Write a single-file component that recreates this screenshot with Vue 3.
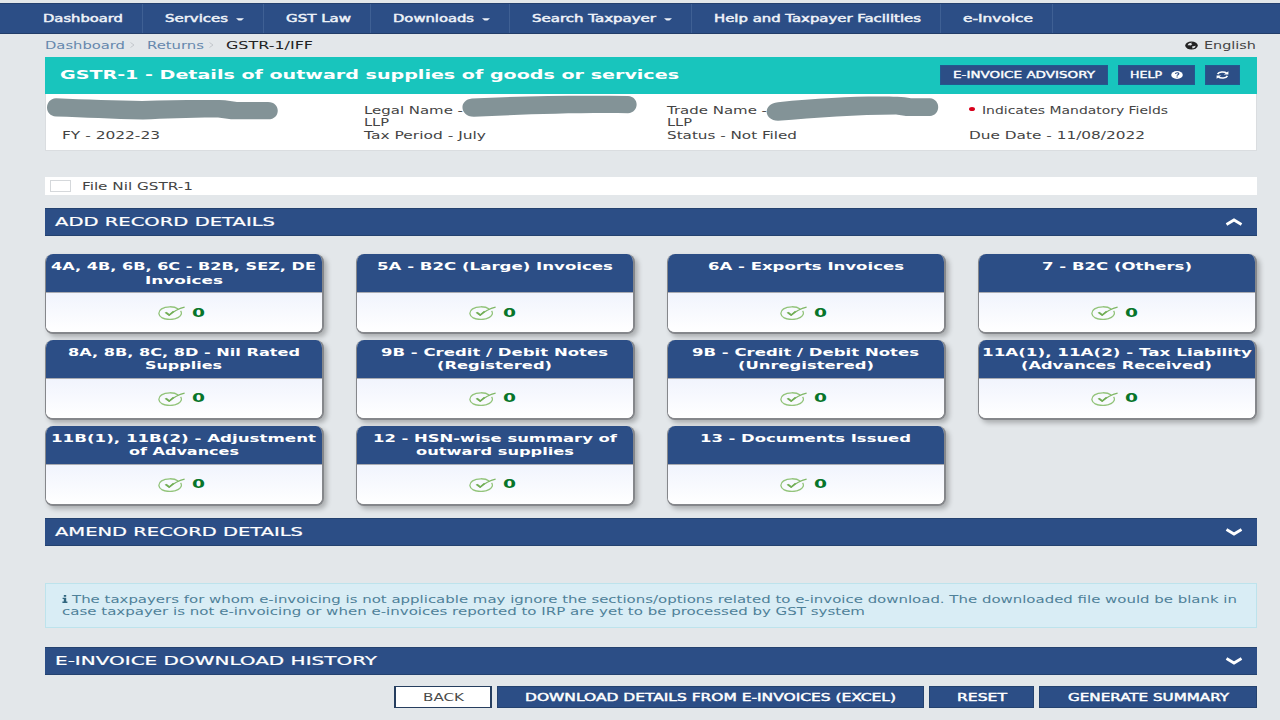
<template>
  <div class="page">
    <nav class="navbar">
      <a v-for="item in navItems" :key="item.text" class="nav-item">
        <WideText :text="item.text" :w="item.w" />
        <svg v-if="item.menu" class="caret" width="8" height="3" viewBox="0 0 8 3">
          <path d="M0 0.3H8L5.4 2.4H2.6Z" fill="currentColor" />
        </svg>
      </a>
    </nav>

    <main class="content">
      <div class="topline">
        <div class="breadcrumb">
          <a><WideText text="Dashboard" :w="80" /></a>
          <svg class="sep" width="5" height="6" viewBox="0 0 5 6"><path d="M0.5 0.5L4 3L0.5 5.5" /></svg>
          <a><WideText text="Returns" :w="57" /></a>
          <svg class="sep" width="5" height="6" viewBox="0 0 5 6"><path d="M0.5 0.5L4 3L0.5 5.5" /></svg>
          <span><WideText text="GSTR-1/IFF" :w="87" /></span>
        </div>
        <div class="language">
          <svg width="13" height="9" viewBox="0 0 13 9">
            <ellipse cx="6.5" cy="4.5" rx="6.3" ry="4" fill="#222" />
            <path d="M2.6 4.2C3.4 2.2 5.4 1.6 7.2 1.8L6 3L7.4 3.6L5.6 4.6L4.4 4.2ZM7 5.6L10.8 4.8L9.6 6.8L7.6 7.4Z" fill="#dfe3e6" />
          </svg>
          <WideText text="English" :w="52" />
        </div>
      </div>

      <header class="title-bar">
        <h1 class="title"><WideText text="GSTR-1 - Details of outward supplies of goods or services" :w="619" /></h1>
        <div class="title-actions">
          <button class="btn-small advisory"><WideText text="E-INVOICE ADVISORY" :w="142" /></button>
          <button class="btn-small help">
            <WideText text="HELP" :w="32" />
            <svg width="12" height="8" viewBox="0 0 12 8">
              <ellipse cx="6" cy="4" rx="5.8" ry="3.9" fill="#fff" stroke="none" />
              <path d="M4.4 2.9C4.6 1.4 7.8 1.4 7.8 2.8C7.8 3.7 6.1 3.7 6.1 4.7M6.1 5.6V6.4" fill="none" stroke="#2c4e86" stroke-width="1.2" />
            </svg>
          </button>
          <button class="btn-small refresh">
            <svg width="13" height="8" viewBox="0 0 13 8" fill="none" stroke="#fff" stroke-width="1.6">
              <path d="M1.6 3.2C2.8 0.6 8.4 0.3 10.6 2.2M11.4 4.8C10.2 7.4 4.6 7.7 2.4 5.8" />
              <path d="M12.4 0.2V3.5H7.8ZM0.6 7.8V4.5H5.2Z" fill="#fff" stroke="none" />
            </svg>
          </button>
        </div>
      </header>

      <section class="info">
        <div v-for="(col, i) in infoColumns" :key="i" class="info-col">
          <div v-for="(line, j) in col" :key="j" class="info-line">
            <span v-if="line.required" class="required"></span>
            <WideText v-if="line.text" :text="line.text" :w="line.w" />
          </div>
        </div>
        <!-- taxpayer identity is masked -->
        <svg class="masks" width="1212" height="30" viewBox="46 94 1212 30" fill="#839397">
          <path d="M56 98.3C85 99.8 118 100.3 142 101C172 100 202 99.8 225 100.2L237 102H268C281 102 281 119.3 268 119.3H231L218 117.6C190 117.5 165 118.6 143 119.6C112 118.6 85 117.3 56 116.4C44 116 44 99 56 98.3Z" />
          <path d="M472 98.5C520 96.2 570 95.3 628 96C640 97 639 112.8 628 113.2C570 112.6 520 114.6 474 116.8C460 117 458 100 472 98.5Z" />
          <path d="M778 102.3C815 98.5 850 96.6 880 96.6C893 96.6 903 97 911 98.2H930C941 99.3 941 115 930 116H906L896 114.4C858 114.4 815 117.5 778 120.8C764 120.6 762 104 778 102.3Z" />
        </svg>
      </section>

      <label class="nil-row">
        <span class="checkbox"></span>
        <WideText text="File Nil GSTR-1" :w="111" />
      </label>

      <div class="section-bar add-bar" @click="addOpen = !addOpen">
        <WideText text="ADD RECORD DETAILS" :w="220" />
        <svg class="chevron" width="18" height="8" viewBox="0 0 18 8"><path d="M1.5 6.5L9 2L16.5 6.5" /></svg>
      </div>

      <div v-show="addOpen" class="cards">
        <div v-for="(card, i) in cards" :key="i" class="card">
          <div class="card-head">
            <WideText v-for="line in card.title" :key="line[0]" :text="line[0]" :w="line[1]" />
          </div>
          <div class="card-body">
            <svg class="tick" width="27" height="14" viewBox="0 0 27 14" fill="none">
              <path d="M20.2 3C16 -0.1 7.6 0.2 3.6 2.9C-0.4 5.6 0.2 9.8 4.2 11.9C8.4 14.1 16.4 14 20.4 11.4C23.4 9.5 24.2 7.2 22.6 4.9" stroke="#93c47b" stroke-width="1.3" />
              <path d="M7 6.4L11 9.4C15 5.8 19.6 2.8 26.6 1.1" stroke="#7fb765" stroke-width="1.1" />
              <path d="M8 6.5L11.3 9L15.6 5.4" stroke="#71ad55" stroke-width="1.6" />
            </svg>
            <span class="count"><WideText :text="String(card.count)" :w="13" /></span>
          </div>
        </div>
      </div>

      <div class="section-bar amend-bar">
        <WideText text="AMEND RECORD DETAILS" :w="248" />
        <svg class="chevron" width="18" height="8" viewBox="0 0 18 8"><path d="M1.5 1.5L9 6L16.5 1.5" /></svg>
      </div>

      <div class="notice">
        <div class="notice-line">
          <svg class="info-icon" width="6" height="8" viewBox="0 0 6 8"><path d="M1.8 0H4.2V1.8H1.8ZM0.6 2.8H4.2V6.6H5.4V8H0.4V6.6H1.8V4.1H0.6Z" fill="#31667f" /></svg>
          <WideText text="The taxpayers for whom e-invoicing is not applicable may ignore the sections/options related to e-invoice download. The downloaded file would be blank in" :w="1165" />
        </div>
        <div class="notice-line">
          <WideText text="case taxpayer is not e-invoicing or when e-invoices reported to IRP are yet to be processed by GST system" :w="803" />
        </div>
      </div>

      <div class="section-bar history-bar">
        <WideText text="E-INVOICE DOWNLOAD HISTORY" :w="322" />
        <svg class="chevron" width="18" height="8" viewBox="0 0 18 8"><path d="M1.5 1.5L9 6L16.5 1.5" /></svg>
      </div>

      <footer class="actions">
        <button class="btn btn-back"><WideText text="BACK" :w="41" /></button>
        <button class="btn btn-download"><WideText text="DOWNLOAD DETAILS FROM E-INVOICES (EXCEL)" :w="371" /></button>
        <button class="btn btn-reset"><WideText text="RESET" :w="50" /></button>
        <button class="btn btn-generate"><WideText text="GENERATE SUMMARY" :w="161" /></button>
      </footer>
    </main>
  </div>
</template>

<script setup>
import { h, ref } from 'vue'

// one line of extended type, w is the set width in px
const WideText = (props) =>
  h('svg', { class: 'wide-text', width: props.w, height: 14 }, [
    h('text', {
      x: 0,
      y: 7,
      dy: '0.365em',
      textLength: props.w,
      lengthAdjust: 'spacingAndGlyphs'
    }, props.text)
  ])
WideText.props = ['text', 'w']

const addOpen = ref(true)

const navItems = [
  { text: 'Dashboard', w: 80 },
  { text: 'Services', w: 63, menu: true },
  { text: 'GST Law', w: 65 },
  { text: 'Downloads', w: 81, menu: true },
  { text: 'Search Taxpayer', w: 124, menu: true },
  { text: 'Help and Taxpayer Facilities', w: 207 },
  { text: 'e-Invoice', w: 70 }
]

const infoColumns = [
  [{}, {}, { text: 'FY - 2022-23', w: 98 }],
  [
    { text: 'Legal Name -', w: 99 },
    { text: 'LLP', w: 25 },
    { text: 'Tax Period - July', w: 122 }
  ],
  [
    { text: 'Trade Name -', w: 100 },
    { text: 'LLP', w: 25 },
    { text: 'Status - Not Filed', w: 130 }
  ],
  [
    { text: 'Indicates Mandatory Fields', w: 186, required: true },
    {},
    { text: 'Due Date - 11/08/2022', w: 176 }
  ]
]

const cards = [
  { title: [['4A, 4B, 6B, 6C - B2B, SEZ, DE', 265], ['Invoices', 78]], count: 0 },
  { title: [['5A - B2C (Large) Invoices', 236]], count: 0 },
  { title: [['6A - Exports Invoices', 196]], count: 0 },
  { title: [['7 - B2C (Others)', 150]], count: 0 },
  { title: [['8A, 8B, 8C, 8D - Nil Rated', 232], ['Supplies', 77]], count: 0 },
  { title: [['9B - Credit / Debit Notes', 227], ['(Registered)', 115]], count: 0 },
  { title: [['9B - Credit / Debit Notes', 227], ['(Unregistered)', 136]], count: 0 },
  { title: [['11A(1), 11A(2) - Tax Liability', 270], ['(Advances Received)', 191]], count: 0 },
  { title: [['11B(1), 11B(2) - Adjustment', 265], ['of Advances', 110]], count: 0 },
  { title: [['12 - HSN-wise summary of', 244], ['outward supplies', 158]], count: 0 },
  { title: [['13 - Documents Issued', 211]], count: 0 }
]
</script>

<style>
body {
  background: #e3e7ea;
}

.wide-text {
  display: block;
  flex-shrink: 0;
  overflow: visible;
  fill: currentColor;
}
</style>

<style scoped>
.page {
  width: 1280px;
  height: 720px;
  overflow: hidden;
  box-sizing: border-box;
  padding-top: 3px;
  background: #e3e7ea;
  color: #444;
  font-family: "DejaVu Sans", sans-serif;
  font-size: 10px;
}

.page * {
  box-sizing: border-box;
}

.navbar {
  display: flex;
  height: 31px;
  padding-left: 22px;
  background: #2c4e86;
  border-top: 1px solid #25416f;
  border-bottom: 1px solid #223d69;
  color: #eef2f8;
}

.nav-item {
  display: flex;
  align-items: center;
  gap: 8px;
  padding: 0 19px 1px 21px;
  border-right: 1px solid #3f6094;
  stroke: currentColor;
  stroke-width: 0.45px;
}

.nav-item + .nav-item {
  padding-left: 22px;
}

.caret {
  margin-top: 2px;
  stroke: none;
}

.content {
  width: 1212px;
  margin-left: 45px;
}

.topline {
  display: flex;
  justify-content: space-between;
  height: 23px;
  padding: 4px 1px 0 0;
}

.breadcrumb,
.language {
  display: flex;
  align-items: center;
  height: 14px;
}

.breadcrumb {
  color: #222;
}

.breadcrumb a {
  color: #6688ad;
}

.sep {
  margin: 0 12px 0 5px;
  fill: none;
  stroke: #c3c8cc;
}

.language {
  gap: 6px;
}

.title-bar {
  display: flex;
  justify-content: space-between;
  align-items: center;
  height: 37px;
  padding: 0 17px 2px 15px;
  background: #18c5bd;
  color: #fff;
}

.title {
  margin: 0;
  font-size: 12px;
  font-weight: bold;
}

.title-actions {
  display: flex;
  gap: 10px;
}

.btn-small {
  display: flex;
  align-items: center;
  justify-content: center;
  height: 20px;
  padding: 0;
  border: 1px solid #22598f;
  background: #2c4e86;
  color: #fff;
  font-family: inherit;
  font-size: 9px;
  stroke: currentColor;
  stroke-width: 0.35px;
}

.advisory {
  width: 168px;
}

.help {
  width: 77px;
  gap: 9px;
}

.refresh {
  width: 35px;
}

.info {
  position: relative;
  display: grid;
  grid-template-columns: repeat(4, 302.6px);
  height: 57px;
  padding-top: 10px;
  border: 1px solid #dadde0;
  border-top: 0;
  background: #fff;
}

.info-col {
  display: grid;
  grid-template-rows: 12px 12.5px 12px;
  align-content: start;
  padding-left: 15.5px;
}

.info-line {
  display: flex;
  align-items: center;
}

.required {
  width: 6px;
  height: 4px;
  margin: 0 7px 3px 0;
  border-radius: 50%;
  background: #d8001c;
}

.masks {
  position: absolute;
  top: 0;
  left: 0;
}

.nil-row {
  display: flex;
  align-items: center;
  height: 18px;
  margin-top: 26px;
  padding: 0 0 1px 5px;
  background: #fff;
}

.checkbox {
  width: 21px;
  height: 12px;
  margin: 1px 11px 0 0;
  border: 1px solid #d5d8db;
  background: #fff;
}

.section-bar {
  display: flex;
  align-items: center;
  justify-content: space-between;
  height: 28px;
  padding: 0 14px 0 10px;
  border: 1px solid #24426f;
  border-width: 1px 0;
  background: #2c4e86;
  color: #fff;
  font-size: 11.5px;
  stroke: currentColor;
  stroke-width: 0.2px;
}

.chevron {
  fill: none;
  stroke: #fff;
  stroke-width: 2.8;
}

.add-bar {
  margin-top: 13px;
  padding-bottom: 1px;
}

.cards {
  display: grid;
  grid-template-columns: repeat(4, 279px);
  grid-auto-rows: 80px;
  gap: 5.8px 32px;
  padding-top: 18px;
}

.card {
  overflow: hidden;
  border: 1px solid #85878b;
  border-width: 0 2px 2px 1px;
  border-radius: 8px;
  background: #fff;
  box-shadow: 3px 3px 5px rgba(0, 0, 0, 0.25);
}

.card-head {
  display: flex;
  flex-direction: column;
  align-items: center;
  height: 38px;
  margin: 0 -2px 0 -1px;
  padding: 5px 1.5px 0 0;
  background: #2c4e86;
  color: #fff;
  font-weight: bold;
}

.card-head .wide-text {
  height: 13.5px;
}

.card-body {
  display: flex;
  align-items: center;
  justify-content: center;
  height: 40px;
  padding-right: 6px;
  border-top: 1px solid #a9abb2;
  background: linear-gradient(#f1f4fd, #fff);
}

.tick {
  margin: 1px 7px 0 0;
}

.count {
  color: #08752a;
  font-size: 12px;
  font-weight: bold;
}

.amend-bar {
  margin-top: 12px;
}

.notice {
  height: 45px;
  margin-top: 37px;
  padding: 9px 16px;
  border: 1px solid #bde3ec;
  background: #d9edf5;
  color: #4f8199;
}

.notice-line {
  display: flex;
  align-items: center;
  height: 12px;
}

.info-icon {
  margin-right: 4px;
}

.history-bar {
  margin-top: 19px;
}

.actions {
  display: flex;
  justify-content: flex-end;
  gap: 5px;
  margin-top: 11px;
}

.btn {
  display: flex;
  align-items: center;
  justify-content: center;
  height: 22px;
  padding: 0;
  border: 1px solid #24426f;
  background: #2c4e86;
  color: #fff;
  font-family: inherit;
  font-size: 10px;
  stroke: currentColor;
  stroke-width: 0.4px;
}

.btn-back {
  width: 98px;
  border: 2px solid #263e5f;
  border-width: 1px 2px;
  background: #fff;
  color: #4a4a4a;
  stroke: none;
}

.btn-download {
  width: 427px;
}

.btn-reset {
  width: 105px;
}

.btn-generate {
  width: 218px;
}
</style>
